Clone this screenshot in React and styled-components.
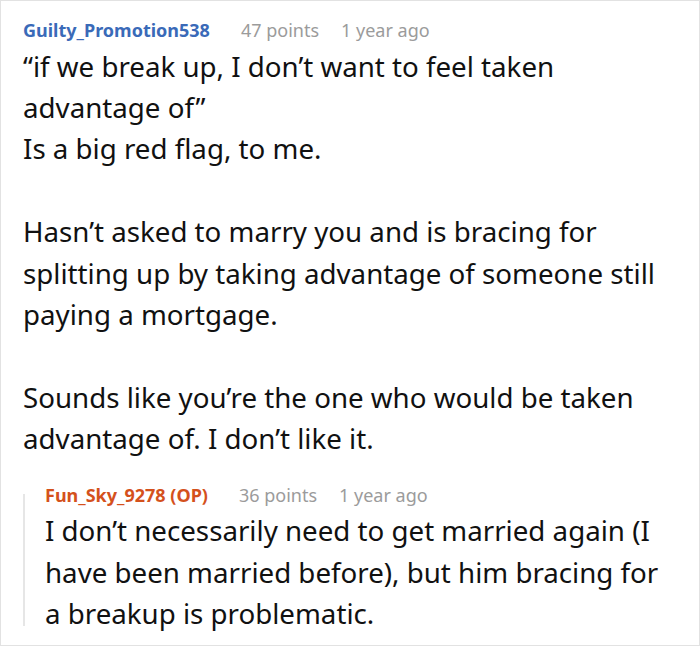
import React from "react";
import styled, { createGlobalStyle } from "styled-components";

const GlobalStyle = createGlobalStyle`
  html, body {
    margin: 0;
    padding: 0;
    background: #fff;
  }
  body {
    font-family: "Noto Sans", "Open Sans", sans-serif;
    color: #111;
  }
`;

const Card = styled.div`
  width: 700px;
  height: 646px;
  box-sizing: border-box;
  border: 1px solid #e2e2e2;
  padding: 15px 30px 0 22px;
  overflow: hidden;
`;

const Meta = styled.div`
  display: flex;
  align-items: baseline;
  font-size: 18px;
  line-height: 29.6px;
`;

const Author = styled.span`
  font-weight: 700;
  color: ${(p) => (p.$op ? "#d4511c" : "#3a6ab8")};
  margin-right: 31px;
`;

const Stat = styled.span`
  color: #9b9b9b;
  margin-right: 22px;
`;

const Body = styled.p`
  margin: 0;
  font-size: 27.7px;
  line-height: 41.4px;
`;

const Reply = styled.div`
  position: relative;
  margin-top: 21px;
  padding-left: 22px;

  &::before {
    content: "";
    position: absolute;
    left: 0;
    top: 13px;
    bottom: 8px;
    width: 2px;
    background: #e6e6e6;
  }
`;

const Comment = ({ author, op, points, age, children }) => (
  <>
    <Meta>
      <Author $op={op}>{author}</Author>
      <Stat>{points}</Stat>
      <Stat>{age}</Stat>
    </Meta>
    <Body>{children}</Body>
  </>
);

const App = () => {
  return (
    <>
      <GlobalStyle />
      <Card>
        <Comment author="Guilty_Promotion538" points="47 points" age="1 year ago">
          “if we break up, I don’t want to feel taken advantage of”
          <br />
          Is a big red flag, to me.
          <br />
          <br />
          Hasn’t asked to marry you and is bracing for splitting up by taking advantage of
          someone still paying a mortgage.
          <br />
          <br />
          Sounds like you’re the one who would be taken advantage of. I don’t like it.
        </Comment>
        <Reply>
          <Comment author="Fun_Sky_9278 (OP)" op points="36 points" age="1 year ago">
            I don’t necessarily need to get married again (I have been married before), but
            him bracing for a breakup is problematic.
          </Comment>
        </Reply>
      </Card>
    </>
  );
};

export default App;
